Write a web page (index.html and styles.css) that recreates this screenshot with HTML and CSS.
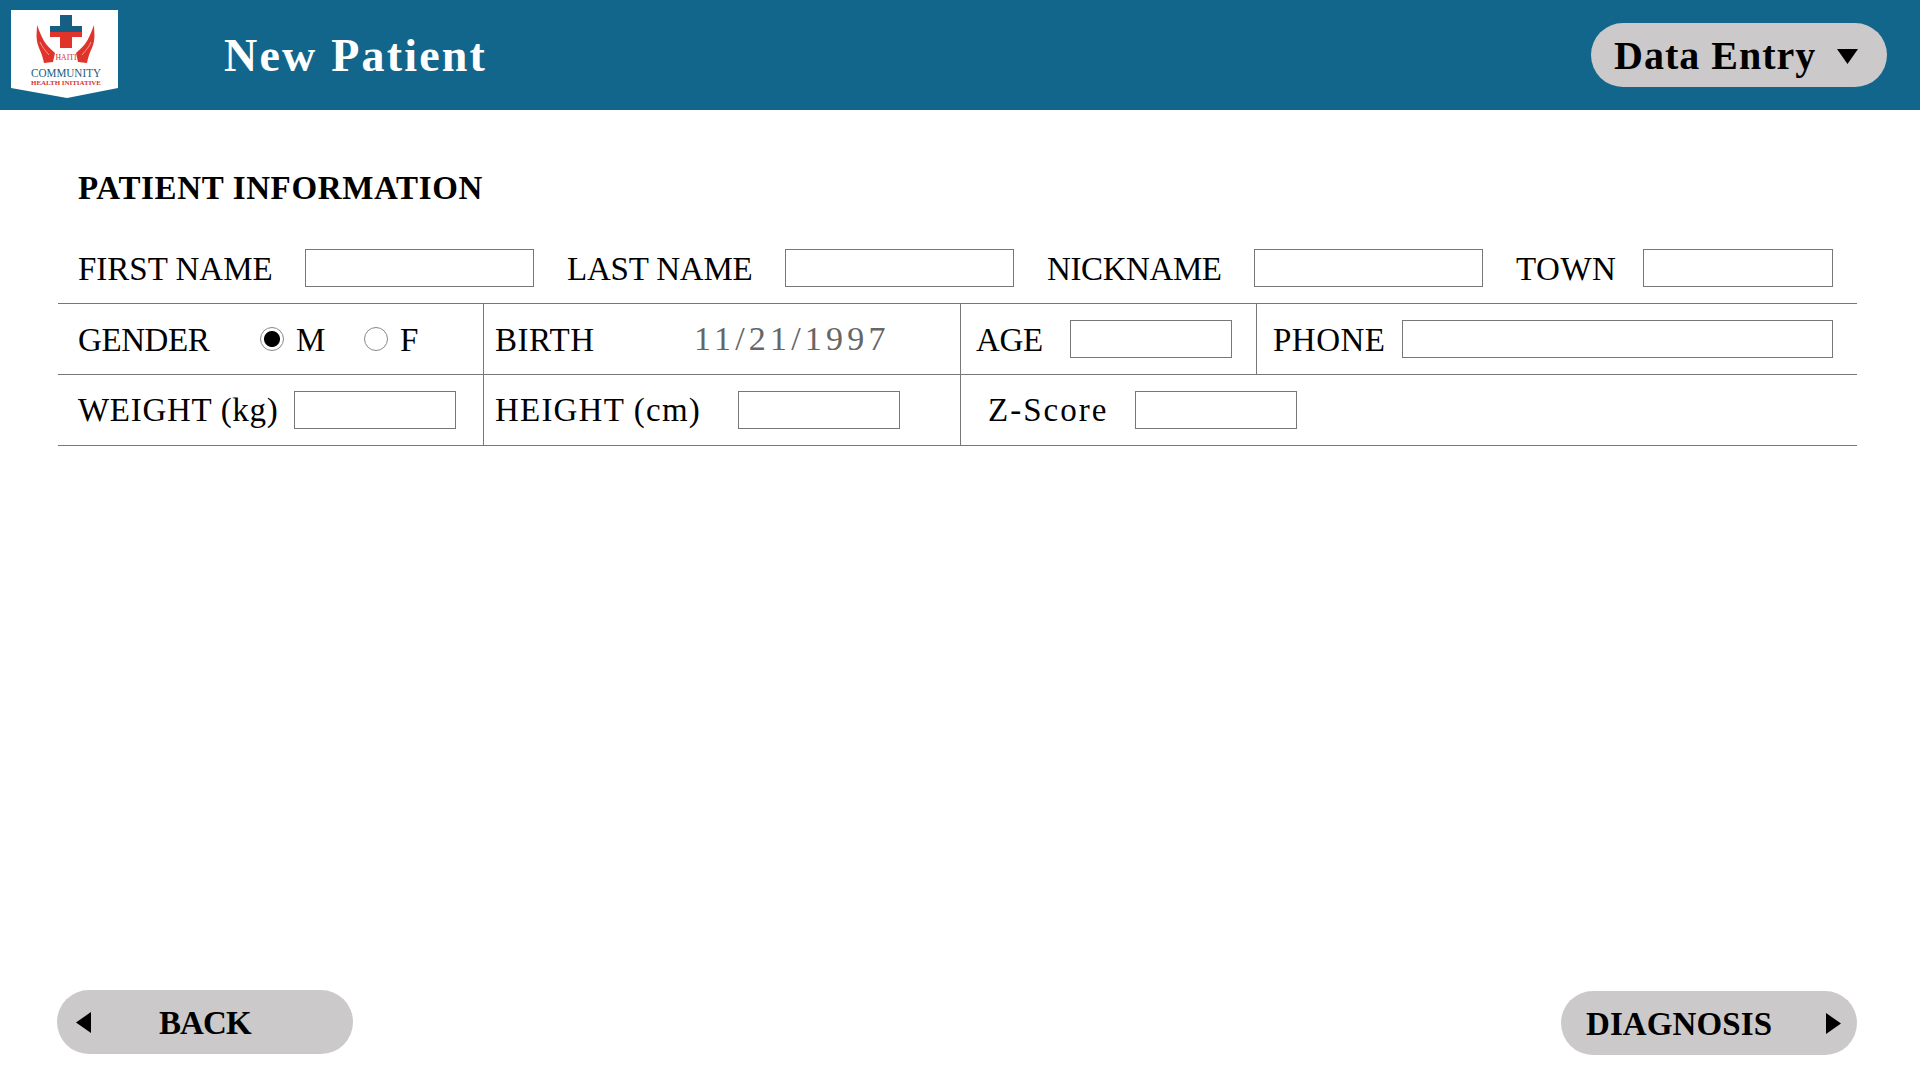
FILE: index.html
```html
<!DOCTYPE html>
<html lang="en">
<head>
<meta charset="utf-8">
<title>New Patient</title>
<link rel="stylesheet" href="styles.css">
</head>
<body>
<div class="page">
  <header class="topbar">
    <svg class="logo" viewBox="0 0 107 88" width="107" height="88" aria-label="Haiti Community Health Initiative">
      <polygon points="0,0 107,0 107,78 56,88 0,78" fill="#ffffff"/>
      <rect x="49" y="5" width="12" height="17" fill="#175f82"/>
      <rect x="39" y="16" width="32" height="6" fill="#175f82"/>
      <rect x="39" y="22" width="32" height="5" fill="#e0342b"/>
      <rect x="49" y="22" width="12" height="16" fill="#e0342b"/>
      <path d="M26,15 C26,20 25,26 26,31 C27,38 31,42 33,53 L42,52 L44,43 C40,39 36,36 33,31 C30,26 28,20 26,15 Z" fill="#e0342b"/>
      <path d="M83,15 C83,20 84,26 83,31 C82,38 78,42 76,53 L67,52 L65,43 C69,39 73,36 76,31 C79,26 81,20 83,15 Z" fill="#e0342b"/>
      <path d="M29,32 C31,37 34,40 38,45" fill="none" stroke="#ffffff" stroke-width="0.5"/>
      <path d="M80,32 C78,37 75,40 71,45" fill="none" stroke="#ffffff" stroke-width="0.5"/>
      <text class="logo-haiti" x="55" y="50" text-anchor="middle" textLength="21" lengthAdjust="spacingAndGlyphs">HAITI</text>
      <text class="logo-community" x="55" y="67" text-anchor="middle" textLength="70" lengthAdjust="spacingAndGlyphs">COMMUNITY</text>
      <text class="logo-health" x="55" y="75" text-anchor="middle" textLength="70" lengthAdjust="spacingAndGlyphs">HEALTH INITIATIVE</text>
    </svg>
    <h1 class="title">New Patient</h1>
    <div class="menu-pill">
      <span>Data Entry</span>
      <svg class="tri-down" viewBox="0 0 21 15" width="21" height="15"><polygon points="0,0 21,0 10.5,15"/></svg>
    </div>
  </header>

  <main class="content">
    <h2 class="section">PATIENT INFORMATION</h2>
    <form class="form">
      <div class="row row-names">
        <label class="lbl">FIRST NAME</label>
        <input class="box" type="text">
        <label class="lbl lbl-gap ls-last">LAST NAME</label>
        <input class="box" type="text">
        <label class="lbl lbl-gap ls-nick">NICKNAME</label>
        <input class="box" type="text">
        <label class="lbl lbl-gap ls-town">TOWN</label>
        <input class="box" type="text">
      </div>
      <div class="row row-cells">
        <div class="cell cell-a">
          <span class="lbl gender">GENDER</span>
          <input class="radio" type="radio" name="gender" checked>
          <span class="lbl radio-m">M</span>
          <input class="radio" type="radio" name="gender">
          <span class="lbl">F</span>
        </div>
        <div class="cell cell-b">
          <span class="lbl birth">BIRTH</span>
          <span class="date">11/21/1997</span>
        </div>
        <div class="cell cell-c">
          <span class="lbl age">AGE</span>
          <input class="box box-short" type="text">
        </div>
        <div class="cell cell-d">
          <span class="lbl phone">PHONE</span>
          <input class="box box-phone" type="text">
        </div>
      </div>
      <div class="row row-cells row-last">
        <div class="cell cell-a">
          <span class="lbl weight">WEIGHT (kg)</span>
          <input class="box box-short" type="text">
        </div>
        <div class="cell cell-b">
          <span class="lbl height">HEIGHT (cm)</span>
          <input class="box box-short" type="text">
        </div>
        <div class="cell cell-z">
          <span class="lbl zscore">Z-Score</span>
          <input class="box box-short" type="text">
        </div>
      </div>
    </form>
  </main>

  <footer class="footer">
    <div class="pill pill-back">
      <svg class="tri" viewBox="0 0 15 21" width="15" height="21"><polygon points="15,0 15,21 0,10.5"/></svg>
      <span>BACK</span>
    </div>
    <div class="pill pill-next">
      <span>DIAGNOSIS</span>
      <svg class="tri" viewBox="0 0 15 21" width="15" height="21"><polygon points="0,0 15,10.5 0,21"/></svg>
    </div>
  </footer>
</div>
</body>
</html>
```
FILE: styles.css
```css
* { box-sizing: border-box; }
html, body { margin: 0; padding: 0; }
body { background: #ffffff; color: #000000; font-family: "Liberation Serif", "Times New Roman", serif; }
.page { width: 1920px; height: 1080px; display: flex; flex-direction: column; overflow: hidden; }

.topbar { height: 110px; background: #12668c; display: flex; align-items: flex-start; padding-left: 11px; padding-right: 33px; flex: none; }
.logo { margin-top: 10px; flex: none; display: block; }
.logo-haiti { font: 400 7.5px "Liberation Serif", serif; fill: #d8322a; }
.logo-community { font: 400 11.5px "Liberation Serif", serif; fill: #1d5a7c; }
.logo-health { font: 700 7px "Liberation Serif", serif; fill: #d8322a; }
.title { margin: 0 0 0 106px; font-size: 46px; line-height: 112px; font-weight: 700; color: #ffffff; letter-spacing: 2.2px; }
.menu-pill { margin: 23px 0 0 auto; width: 296px; height: 64px; border-radius: 32px; background: #cbc9ca; display: flex; align-items: center; padding-left: 23px; font-size: 40px; font-weight: 700; letter-spacing: 1px; }
.tri-down { margin-left: 21px; margin-top: 2px; fill: #000; }

.content { margin: 0 63px 0 58px; flex: none; }
.section { margin: 58px 0 25px; padding-left: 20px; font-size: 33px; line-height: 40px; font-weight: 700; letter-spacing: 0.65px; }
.row { height: 71px; border-bottom: 1px solid #777; }
.row-names { display: grid; align-items: center; padding-left: 20px; width: 1799px; grid-template-columns: 227px 229px 251px 229px 240px 229px 160px 190px; }
.lbl { font-size: 33px; line-height: 40px; padding-top: 2px; white-space: nowrap; }
.row-last .lbl { padding-top: 0; }
.lbl-gap { padding-left: 33px; }
.ls-last { letter-spacing: -0.2px; }
.ls-nick { letter-spacing: -0.4px; }
.ls-town { letter-spacing: 0.5px; }
.box { height: 38px; border: 1.5px solid #777; background: #fff; padding: 0; margin: 0; width: 100%; border-radius: 0; outline: none; display: block; }
.box-short { width: 162px; }
.box-phone { width: 431px; }

.row-cells { display: flex; }
.cell { height: 70px; display: flex; align-items: center; border-right: 1px solid #777; flex: none; }
.cell-a { width: 426px; padding-left: 20px; }
.cell-b { width: 477px; padding-left: 11px; }
.cell-c { width: 296px; padding-left: 15px; }
.cell-d { flex: 1; border-right: 0; padding-left: 16px; }
.cell-z { flex: 1; border-right: 0; padding-left: 27px; }

.gender { width: 182px; letter-spacing: -0.4px; }
.radio { appearance: none; -webkit-appearance: none; width: 24px; height: 24px; margin: 0 12px 0 0; border: 1px solid #888; border-radius: 50%; background: #fff; flex: none; }
.radio:checked { background: radial-gradient(circle, #000 0 7.5px, #fff 8.5px); }
.radio-m { width: 68px; }
.birth { width: 199px; letter-spacing: 0.5px; }
.date { font-size: 34px; line-height: 40px; color: #666; letter-spacing: 4.2px; }
.age { width: 94px; letter-spacing: -0.3px; }
.phone { width: 129px; letter-spacing: 0.5px; }
.weight { width: 216px; letter-spacing: 0.7px; }
.height { width: 243px; letter-spacing: 1.2px; }
.zscore { width: 147px; letter-spacing: 2px; }

.footer { margin-top: auto; display: flex; justify-content: space-between; align-items: flex-end; padding: 0 63px 25px 57px; flex: none; }
.pill { width: 296px; height: 64px; border-radius: 32px; background: #cbc9ca; display: flex; align-items: center; font-size: 33px; font-weight: 700; }
.pill span { padding-top: 2px; }
.tri { fill: #000; flex: none; }
.pill-back { margin-bottom: 1px; padding-left: 19px; letter-spacing: -0.9px; }
.pill-back span { margin-left: 68px; }
.pill-next { padding-left: 25px; letter-spacing: 0.1px; }
.pill-next .tri { margin-left: auto; margin-right: 16px; }
```
